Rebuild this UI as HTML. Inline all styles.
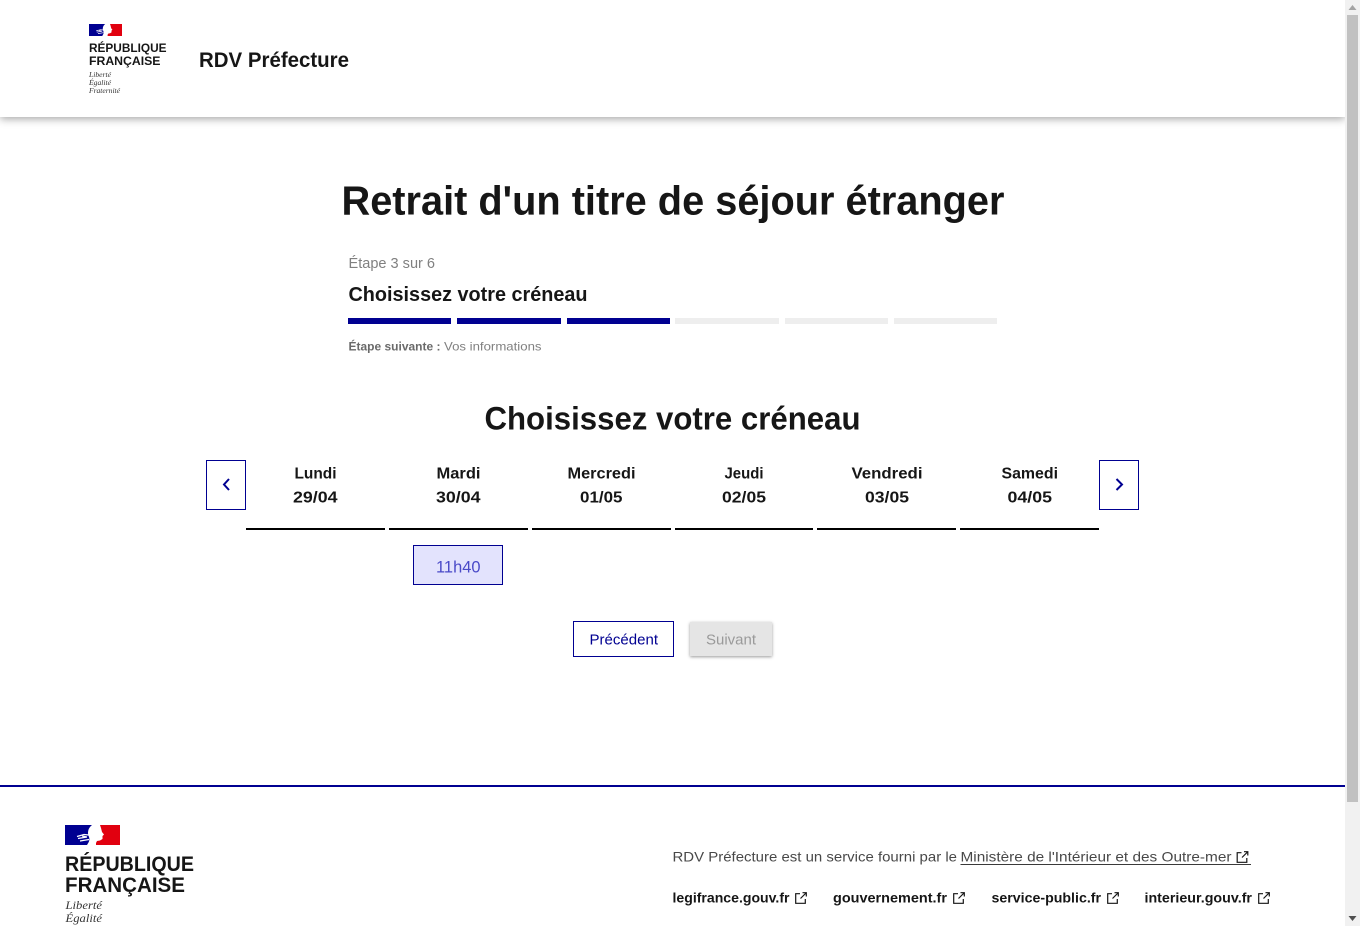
<!DOCTYPE html>
<html lang="fr">
<head>
<meta charset="utf-8">
<title>RDV Préfecture</title>
<style>
html,body{margin:0;padding:0;width:1360px;height:926px;overflow:hidden;background:#fff}
.abs{position:absolute;box-sizing:border-box}
#hdr{left:0;top:0;width:1345px;height:117px;background:#fff;box-shadow:0 2px 8px rgba(0,0,0,.35)}
.bar{position:absolute;top:318px;height:6px}
.on{background:#000091}.off{background:#eee}
.line{position:absolute;top:528px;height:2px;background:#000}
.nav{position:absolute;top:460px;width:40px;height:50px;border:1px solid #000091;box-sizing:border-box;background:#fff}
#slot{left:413px;top:545px;width:90px;height:40px;background:#e3e3fd;border:1px solid #000091}
#prev{left:573px;top:621px;width:101px;height:36px;border:1px solid #000091;background:#fff}
#next{left:690px;top:622px;width:82px;height:34px;background:#e5e5e5;box-shadow:0 1px 3px rgba(0,0,0,.4)}
#fline{left:0;top:785px;width:1345px;height:2px;background:#000091}
#sb{left:1345px;top:0;width:15px;height:926px;background:#f1f1f1}
#th{left:1347px;top:15px;width:11px;height:787px;background:#c1c1c1}
svg.t{position:absolute;left:0;top:0;width:1360px;height:926px}
text{font-family:"Liberation Sans",sans-serif;fill:#161616}
.b{font-weight:700}
.i{font-family:"Liberation Serif",serif;font-style:italic;fill:#333}
</style>
</head>
<body>
<div class="abs" id="hdr"></div>
<div class="bar on" style="left:348px;width:103px"></div>
<div class="bar on" style="left:457px;width:104px"></div>
<div class="bar on" style="left:567px;width:103px"></div>
<div class="bar off" style="left:675px;width:104px"></div>
<div class="bar off" style="left:785px;width:103px"></div>
<div class="bar off" style="left:894px;width:103px"></div>
<div class="nav" style="left:206px"></div>
<div class="nav" style="left:1099px"></div>
<div class="line" style="left:246px;width:139px"></div>
<div class="line" style="left:389px;width:139px"></div>
<div class="line" style="left:532px;width:139px"></div>
<div class="line" style="left:675px;width:138px"></div>
<div class="line" style="left:817px;width:139px"></div>
<div class="line" style="left:960px;width:139px"></div>
<div class="abs" id="slot"></div>
<div class="abs" id="prev"></div>
<div class="abs" id="next"></div>
<div class="abs" id="fline"></div>
<div class="abs" id="sb"></div>
<div class="abs" id="th"></div>
<svg class="t" viewBox="0 0 1360 926" xmlns="http://www.w3.org/2000/svg">
<defs>
<g id="flag">
<rect width="55" height="20" fill="#e1000f"/>
<rect width="28" height="20" fill="#000091"/>
<path d="M27 0H35L36 3L37 7L39 9.500L37.500 11L37.500 14L35 15.500L32 16L31 18V20H22C24 17 25 15 24 12C22 8 23 3 27 0Z" fill="#fff"/>
<path d="M12 11.500L19 9.500L24 10M13 13.500L22 12M15 16L24 14.500M17 11L22 12" stroke="#fff" stroke-width="1.200" fill="none"/>
</g>
<g id="ext" fill="none" stroke="#161616" stroke-width="1.200">
<path d="M5 1.700H.7V11.300H10.300V7"/>
<path d="M5.500 6.500L11 1M7.500 .7H11.300V4.500"/>
</g>
</defs>

<use href="#flag" transform="translate(89 24) scale(.6)"/>
<text class="b" x="89" y="52" font-size="12" textLength="77.500" lengthAdjust="spacingAndGlyphs">RÉPUBLIQUE</text>
<text class="b" x="89" y="65" font-size="12" textLength="71.500" lengthAdjust="spacingAndGlyphs">FRANÇAISE</text>
<text class="i" x="89" y="77" font-size="7" textLength="22" lengthAdjust="spacingAndGlyphs">Liberté</text>
<text class="i" x="89" y="85" font-size="7" textLength="22" lengthAdjust="spacingAndGlyphs">Égalité</text>
<text class="i" x="89" y="93" font-size="7" textLength="31" lengthAdjust="spacingAndGlyphs">Fraternité</text>
<text class="b" x="199" y="67" font-size="21" textLength="150" lengthAdjust="spacingAndGlyphs">RDV Préfecture</text>

<text class="b" x="341.500" y="214.500" font-size="41" textLength="663" lengthAdjust="spacingAndGlyphs">Retrait d'un titre de séjour étranger</text>
<text x="348.500" y="268" font-size="14.500" textLength="86.500" lengthAdjust="spacingAndGlyphs" style="fill:#808080">Étape 3 sur 6</text>
<text class="b" x="348.500" y="301" font-size="20" textLength="239" lengthAdjust="spacingAndGlyphs">Choisissez votre créneau</text>
<text class="b" x="348.500" y="350.500" font-size="12" textLength="92" lengthAdjust="spacingAndGlyphs" style="fill:#6a6a6a">Étape suivante :</text>
<text x="444" y="350.500" font-size="12" textLength="97.500" lengthAdjust="spacingAndGlyphs" style="fill:#808080">Vos informations</text>
<text class="b" x="484.500" y="429.500" font-size="32" textLength="376" lengthAdjust="spacingAndGlyphs">Choisissez votre créneau</text>

<path d="M229 479L224 484.500L229 490" fill="none" stroke="#000091" stroke-width="2"/>
<path d="M1116.500 479L1122 484.500L1116.500 490" fill="none" stroke="#000091" stroke-width="2"/>

<text class="b" x="294.500" y="478.500" font-size="16" textLength="42" lengthAdjust="spacingAndGlyphs">Lundi</text>
<text class="b" x="293" y="502.500" font-size="16" textLength="44.500" lengthAdjust="spacingAndGlyphs">29/04</text>
<text class="b" x="436.500" y="478.500" font-size="16" textLength="44" lengthAdjust="spacingAndGlyphs">Mardi</text>
<text class="b" x="436" y="502.500" font-size="16" textLength="44.500" lengthAdjust="spacingAndGlyphs">30/04</text>
<text class="b" x="567.500" y="478.500" font-size="16" textLength="68" lengthAdjust="spacingAndGlyphs">Mercredi</text>
<text class="b" x="580" y="502.500" font-size="16" textLength="42.500" lengthAdjust="spacingAndGlyphs">01/05</text>
<text class="b" x="724.500" y="478.500" font-size="16" textLength="39" lengthAdjust="spacingAndGlyphs">Jeudi</text>
<text class="b" x="722" y="502.500" font-size="16" textLength="44" lengthAdjust="spacingAndGlyphs">02/05</text>
<text class="b" x="851.500" y="478.500" font-size="16" textLength="71" lengthAdjust="spacingAndGlyphs">Vendredi</text>
<text class="b" x="865" y="502.500" font-size="16" textLength="44" lengthAdjust="spacingAndGlyphs">03/05</text>
<text class="b" x="1001.500" y="478.500" font-size="16" textLength="56.500" lengthAdjust="spacingAndGlyphs">Samedi</text>
<text class="b" x="1007.500" y="502.500" font-size="16" textLength="44.500" lengthAdjust="spacingAndGlyphs">04/05</text>

<text x="436" y="572.500" font-size="17" textLength="44.500" lengthAdjust="spacingAndGlyphs" style="fill:#4a4ac8">11h40</text>
<text x="589.500" y="644.500" font-size="14.500" textLength="68.500" lengthAdjust="spacingAndGlyphs" style="fill:#000091">Précédent</text>
<text x="706" y="644.500" font-size="14.500" textLength="50" lengthAdjust="spacingAndGlyphs" style="fill:#9a9a9a">Suivant</text>

<use href="#flag" transform="translate(65 825)"/>
<text class="b" x="65" y="871" font-size="21.500" textLength="129" lengthAdjust="spacingAndGlyphs">RÉPUBLIQUE</text>
<text class="b" x="65" y="892" font-size="21.500" textLength="120" lengthAdjust="spacingAndGlyphs">FRANÇAISE</text>
<text class="i" x="65.500" y="909" font-size="12" textLength="36.500" lengthAdjust="spacingAndGlyphs">Liberté</text>
<text class="i" x="65.500" y="922" font-size="12" textLength="36.500" lengthAdjust="spacingAndGlyphs">Égalité</text>

<text x="672.500" y="861.500" font-size="14" textLength="284.500" lengthAdjust="spacingAndGlyphs" style="fill:#484848">RDV Préfecture est un service fourni par le</text>
<text x="960.500" y="861.500" font-size="14" textLength="271" lengthAdjust="spacingAndGlyphs" style="fill:#484848">Ministère de l'Intérieur et des Outre-mer</text>
<rect x="960.500" y="864" width="290.500" height="1" fill="#3a3a3a"/>
<use href="#ext" transform="translate(1236.500 851)"/>
<text class="b" x="672.500" y="902.500" font-size="14" textLength="117" lengthAdjust="spacingAndGlyphs">legifrance.gouv.fr</text>
<use href="#ext" transform="translate(795 892)"/>
<text class="b" x="833" y="902.500" font-size="14" textLength="114" lengthAdjust="spacingAndGlyphs">gouvernement.fr</text>
<use href="#ext" transform="translate(953 892)"/>
<text class="b" x="991.500" y="902.500" font-size="14" textLength="109.500" lengthAdjust="spacingAndGlyphs">service-public.fr</text>
<use href="#ext" transform="translate(1107 892)"/>
<text class="b" x="1144.500" y="902.500" font-size="14" textLength="107.500" lengthAdjust="spacingAndGlyphs">interieur.gouv.fr</text>
<use href="#ext" transform="translate(1258 892)"/>

<path d="M1352.500 5L1356.500 10H1348.500Z" fill="#a3a3a3"/>
<path d="M1352.500 921L1356.500 916H1348.500Z" fill="#505050"/>
</svg>
</body>
</html>
